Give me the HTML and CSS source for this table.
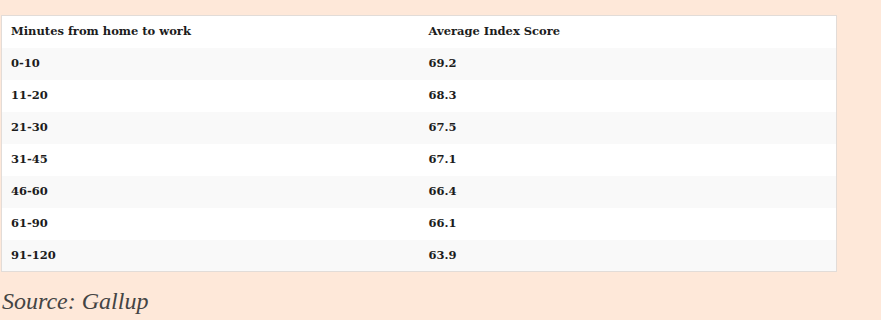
FILE: index.html
```html
<!DOCTYPE html>
<html>
<head>
<meta charset="utf-8">
<link rel="stylesheet" href="styles.css">
</head>
<body>
<div class="wrap">
<table class="data">
<thead>
<tr><th>Minutes from home to work</th><th>Average Index Score</th></tr>
</thead>
<tbody>
<tr><td>0-10</td><td>69.2</td></tr>
<tr><td>11-20</td><td>68.3</td></tr>
<tr><td>21-30</td><td>67.5</td></tr>
<tr><td>31-45</td><td>67.1</td></tr>
<tr><td>46-60</td><td>66.4</td></tr>
<tr><td>61-90</td><td>66.1</td></tr>
<tr><td>91-120</td><td>63.9</td></tr>
</tbody>
</table>
<p class="source">Source: Gallup</p>
</div>
</body>
</html>
```
FILE: styles.css
```css
html, body {
  margin: 0;
  padding: 0;
  background: #fee8d9;
}
.wrap {
  padding: 15px 0 0 1px;
}
.data {
  width: 836px;
  border-collapse: collapse;
  border: 1px solid #e2dcd8;
  font-family: "DejaVu Serif", serif;
  font-weight: bold;
  font-size: 11.5px;
  color: #1c1c1c;
}
.data th, .data td {
  height: 32px;
  padding: 0 0 1px 9px;
  text-align: left;
  vertical-align: middle;
  box-sizing: border-box;
}
.data th:first-child, .data td:first-child {
  width: 418px;
}
.data thead tr {
  background: #ffffff;
}
.data tbody tr:nth-child(odd) {
  background: #f9f9f9;
}
.data tbody tr:nth-child(even) {
  background: #ffffff;
}
.source {
  margin: 16px 0 0 1px;
  font-family: "Liberation Serif", serif;
  font-style: italic;
  font-size: 24px;
  color: #444444;
}
```
